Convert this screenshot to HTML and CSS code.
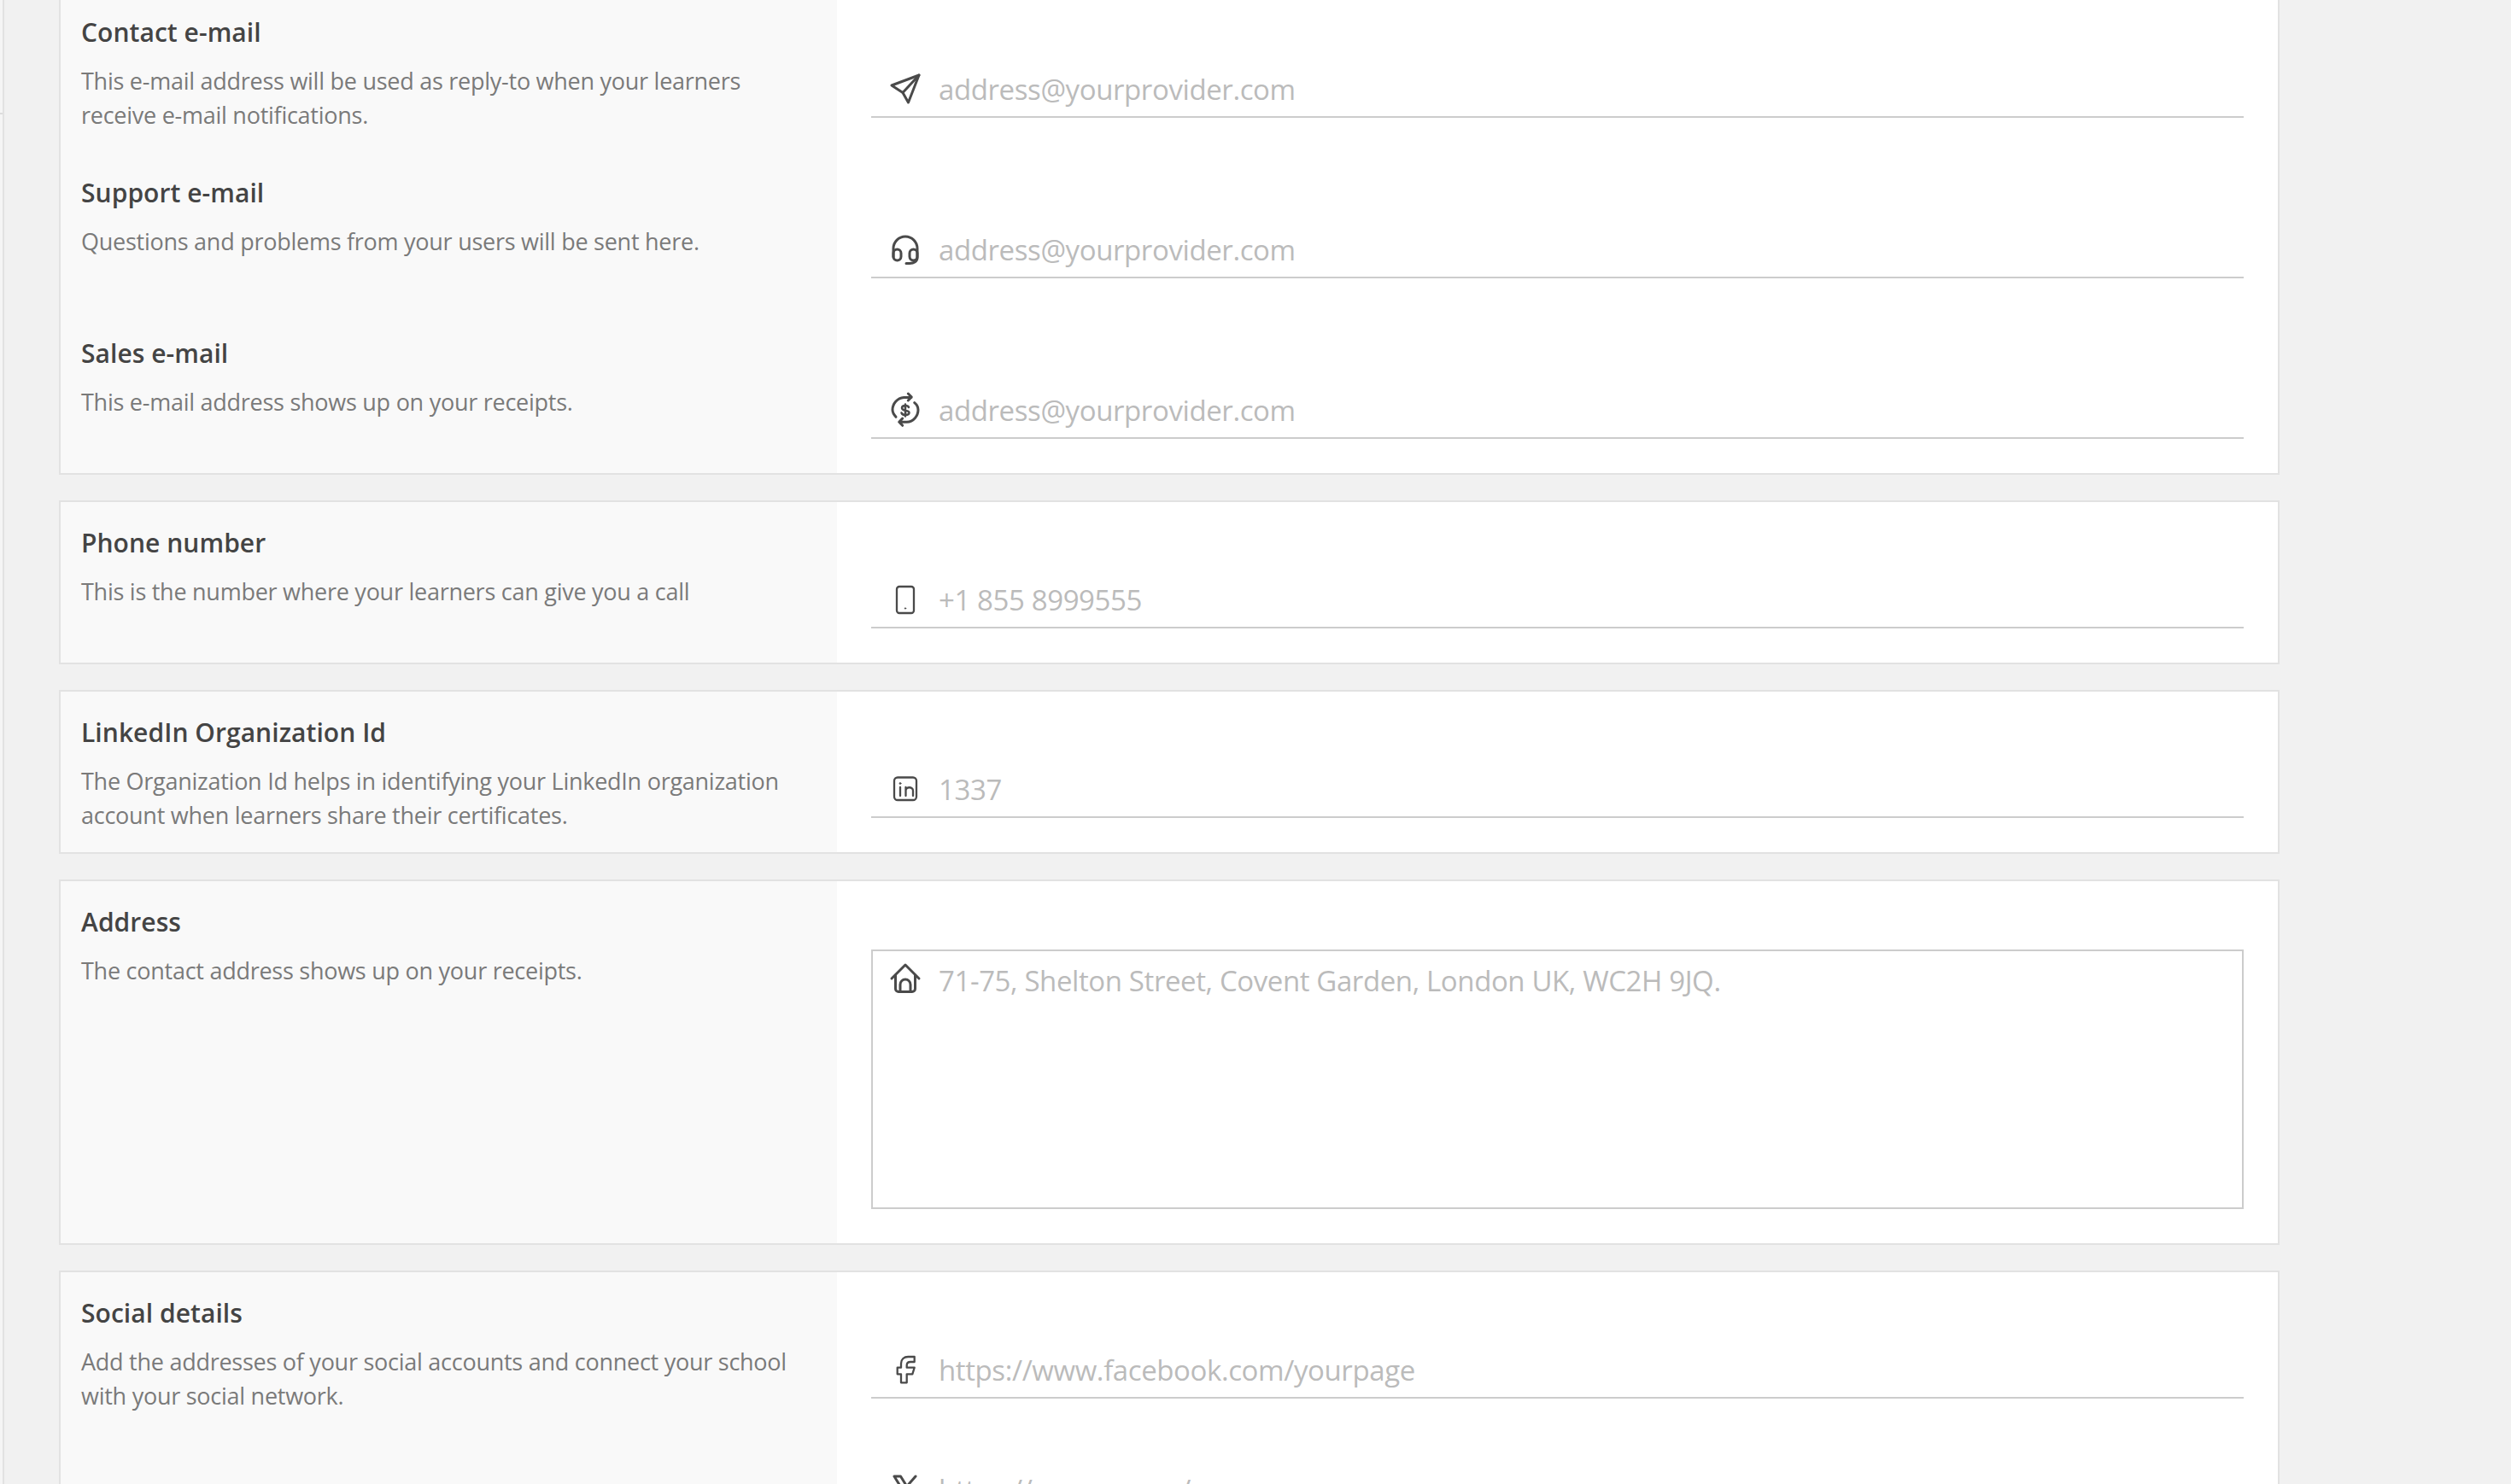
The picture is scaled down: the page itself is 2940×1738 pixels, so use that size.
FILE: index.html
```html
<!DOCTYPE html>
<html lang="en">
<head>
<meta charset="utf-8">
<title>Contact details</title>
<link rel="stylesheet" href="styles.css">
</head>
<body>
<aside class="rail"><span class="rail-tick"></span></aside>
<main class="page">
  <section class="card">
    <div class="row">
      <div class="info"><h3>Contact e-mail</h3><p>This e-mail address will be used as reply-to when your learners receive e-mail notifications.</p></div>
      <div class="field">
        <label class="input">
          <svg class="icon" viewBox="0 0 32 32"><path d="M32 0 0 12l13 8.500L19.500 32z"/><path d="M32 0 13 20.500"/></svg>
          <span class="ph">address@yourprovider.com</span>
        </label>
      </div>
    </div>
    <div class="row">
      <div class="info"><h3>Support e-mail</h3><p>Questions and problems from your users will be sent here.</p></div>
      <div class="field">
        <label class="input">
          <svg class="icon" viewBox="0 0 32 32"><path d="M2 25V15a14 14 0 0 1 28 0v10"/><rect x="2" y="16" width="9" height="13" rx="4.500"/><rect x="21" y="16" width="9" height="13" rx="4.500"/><path d="M30 26c0 4-4 6.500-9 6.500h-4"/></svg>
          <span class="ph">address@yourprovider.com</span>
        </label>
      </div>
    </div>
    <div class="row">
      <div class="info"><h3>Sales e-mail</h3><p>This e-mail address shows up on your receipts.</p></div>
      <div class="field">
        <label class="input">
          <svg class="icon" viewBox="0 0 32 32"><path d="M5 24.300C2.500 21.500 1 19 1 16 1 9 6.500 2 14.300 1.500H23M19.300-3l4 4-4 4"/><path d="M26.700 7.700C29.500 10 31 13 31 16c0 7-5.500 14-13.300 14.300H9M12.700 26l-4 4.300 4 4"/><path class="dollar" d="M20 13c-.5-1.500-2-2-4-2s-4 .8-4 2.800c0 4.500 8.500 1.800 8.500 5.500 0 2-2 2.700-4.500 2.700s-4-1-4.500-2.500M16 9.500v14"/></svg>
          <span class="ph">address@yourprovider.com</span>
        </label>
      </div>
    </div>
  </section>
  <section class="card">
    <div class="row">
      <div class="info"><h3>Phone number</h3><p>This is the number where your learners can give you a call</p></div>
      <div class="field">
        <label class="input">
          <svg class="icon icon-thin" viewBox="0 0 32 32"><rect x="6" y="1" width="20" height="31" rx="3"/><circle class="dot" cx="16" cy="26.500" r=".7"/></svg>
          <span class="ph">+1 855 8999555</span>
        </label>
      </div>
    </div>
  </section>
  <section class="card">
    <div class="row">
      <div class="info"><h3>LinkedIn Organization Id</h3><p>The Organization Id helps in identifying your LinkedIn organization account when learners share their certificates.</p></div>
      <div class="field">
        <label class="input">
          <svg class="icon icon-thin" viewBox="0 0 32 32"><rect x="3" y="2.500" width="26" height="26.500" rx="4"/><path d="M10 14v10M16.500 24V14M16.500 18c0-5 8.500-5 8.500 0v6"/><circle class="dot" cx="10" cy="9.500" r=".9"/></svg>
          <span class="ph">1337</span>
        </label>
      </div>
    </div>
  </section>
  <section class="card">
    <div class="row row-tall">
      <div class="info"><h3>Address</h3><p>The contact address shows up on your receipts.</p></div>
      <div class="field">
        <label class="input area">
          <svg class="icon" viewBox="0 0 32 32"><path d="M0 16 16 0l16 16"/><path d="M4.500 12v16a3.500 3.500 0 0 0 3.500 3.500h16a3.500 3.500 0 0 0 3.500-3.500V12"/><path d="M10 31.500V23a6 6 0 0 1 12 0v8.500"/></svg>
          <span class="ph">71-75, Shelton Street, Covent Garden, London UK, WC2H 9JQ.</span>
        </label>
      </div>
    </div>
  </section>
  <section class="card">
    <div class="row">
      <div class="info"><h3>Social details</h3><p>Add the addresses of your social accounts and connect your school with your social network.</p></div>
      <div class="field">
        <label class="input">
          <svg class="icon icon-thin" viewBox="0 0 32 32"><path d="M26.700 1v6H22c-2.500 0-4.300 1.500-4.300 4v2.700h9l-2.400 7.600h-6.600v10H11v-10H6.700v-7.600H11V9c0-5 3.500-8 8.300-8z"/></svg>
          <span class="ph">https://www.facebook.com/yourpage</span>
        </label>
      </div>
    </div>
    <div class="row row-compact">
      <div class="info"></div>
      <div class="field">
        <label class="input">
          <svg class="icon" viewBox="0 0 32 32"><path d="M3 1h7.500L29 31h-7.500zM28 1 18 12.500M14 18 3 31"/></svg>
          <span class="ph">https://www.x.com/yourpage</span>
        </label>
      </div>
    </div>
  </section>
</main>
</body>
</html>
```

FILE: styles.css
```css
html, body {
  margin: 0;
  height: 100%;
  overflow: hidden;
  background: #f1f1f1;
}
body {
  display: flex;
  align-items: flex-start;
  font-family: "Open Sans", "Noto Sans", sans-serif;
}
.rail {
  position: relative;
  flex: none;
  box-sizing: border-box;
  width: 5px;
  height: 100%;
  background: #f5f5f5;
  border-right: 2px solid #e2e2e2;
}
.rail-tick {
  position: absolute;
  left: 0;
  top: 132px;
  width: 3px;
  height: 2px;
  background: #dcdcdc;
}
.page {
  flex: none;
  display: flex;
  flex-direction: column;
  gap: 30px;
  box-sizing: border-box;
  width: 2600px;
  margin: -12px 0 0 64px;
}
.card {
  background: #fff;
  border: 2px solid #e2e2e2;
}
.row {
  display: grid;
  grid-template-columns: 909px 1fr;
  height: 188px;
}
.row-tall {
  height: 424px;
}
.row-compact {
  height: 140px;
}
.info {
  background: #f9f9f9;
  padding: 26px 30px 0 24px;
}
.info h3 {
  margin: 0;
  font-size: 30px;
  line-height: 44px;
  font-weight: 600;
  letter-spacing: 0.05px;
  color: #444;
}
.info p {
  margin: 15px 0 0;
  font-size: 27px;
  line-height: 39.500px;
  letter-spacing: -0.26px;
  color: #7a7a7a;
}
.field {
  display: flex;
  flex-direction: column;
  justify-content: flex-end;
  padding: 0 40px 40px;
}
.input {
  display: flex;
  align-items: center;
  gap: 23px;
  height: 64px;
  padding: 0 24px;
  border-bottom: 2px solid #ccc;
}
.area {
  box-sizing: border-box;
  height: 304px;
  align-items: flex-start;
  padding: 11px 22px 0;
  border: 2px solid #ccc;
}
.icon {
  flex: none;
  width: 32px;
  height: 32px;
  fill: none;
  stroke: #4a4a4a;
  stroke-width: 3;
  stroke-linecap: round;
  stroke-linejoin: round;
  overflow: visible;
}
.icon-thin {
  stroke-width: 2.300;
}
.area .icon {
  margin-top: 5px;
}
.icon .dot {
  fill: #4a4a4a;
  stroke-width: 1;
}
.icon .dollar {
  stroke-width: 2.500;
}
.ph {
  margin-top: 2px;
  font-size: 33px;
  line-height: 44px;
  letter-spacing: -0.4px;
  color: #bbb;
  white-space: nowrap;
}
```
